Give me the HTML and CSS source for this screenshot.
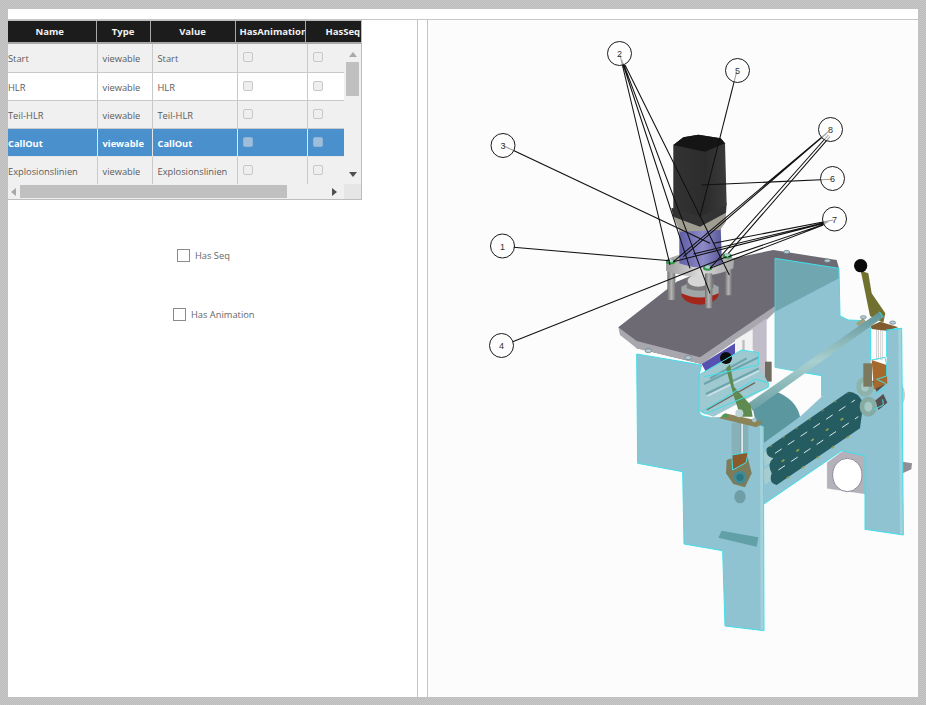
FILE: index.html
```html
<!DOCTYPE html>
<html lang="de">
<head>
<meta charset="utf-8">
<title>Viewables</title>
<link rel="stylesheet" href="styles.css">
</head>
<body>
<div class="page">
  <div class="topstrip"></div>
  <main class="panels">
    <section class="left-panel">
      <div class="grid">
        <div class="grid-body">
          <table class="table head-table">
            <colgroup><col class="h1"><col class="h2"><col class="h3"><col class="h4"><col class="h5"></colgroup>
            <thead>
              <tr><th class="th-name">Name</th><th>Type</th><th>Value</th><th class="th-anim">HasAnimation</th><th class="th-seq">HasSeq</th></tr>
            </thead>
          </table>
          <table class="table">
            <colgroup><col class="c1"><col class="c2"><col class="c3"><col class="c4"><col class="c5"></colgroup>
            <tbody>
              <tr class="alt"><td>Start</td><td>viewable</td><td>Start</td><td><i class="mini"></i></td><td><i class="mini"></i></td></tr>
              <tr><td>HLR</td><td>viewable</td><td>HLR</td><td><i class="mini"></i></td><td><i class="mini"></i></td></tr>
              <tr class="alt"><td>Teil-HLR</td><td>viewable</td><td>Teil-HLR</td><td><i class="mini"></i></td><td><i class="mini"></i></td></tr>
              <tr class="sel"><td>CallOut</td><td>viewable</td><td>CallOut</td><td><i class="mini"></i></td><td><i class="mini"></i></td></tr>
              <tr class="alt"><td>Explosionslinien</td><td>viewable</td><td>Explosionslinien</td><td><i class="mini"></i></td><td><i class="mini"></i></td></tr>
            </tbody>
          </table>
          <div class="vscroll">
            <span class="arrow up"></span>
            <span class="vthumb"></span>
            <span class="arrow down"></span>
          </div>
        </div>
        <div class="hscroll">
          <span class="arrow left"></span>
          <span class="hthumb"></span>
          <span class="arrow right"></span>
          <span class="corner"></span>
        </div>
      </div>
      <label class="check check-seq"><span class="box"></span>Has Seq</label>
      <label class="check check-anim"><span class="box"></span>Has Animation</label>
    </section>
    <section class="right-panel">
      <svg class="model" viewBox="428 20 490 677" width="490" height="677" aria-label="3D model with callouts">
        <defs>
          <linearGradient id="purple" x1="0" x2="1" y1="0" y2="0">
            <stop offset="0" stop-color="#5f5da6"/><stop offset=".55" stop-color="#8c8ac8"/><stop offset="1" stop-color="#5a5898"/>
          </linearGradient>
          <linearGradient id="motor" x1="0" x2="1" y1="0" y2="0">
            <stop offset="0" stop-color="#333"/><stop offset=".6" stop-color="#2c2c2c"/><stop offset="1" stop-color="#3b3b3b"/>
          </linearGradient>
          <linearGradient id="leg" x1="0" x2="1" y1="0" y2="0">
            <stop offset="0" stop-color="#6f6f6f"/><stop offset=".5" stop-color="#b4b4b4"/><stop offset="1" stop-color="#777"/>
          </linearGradient>
          <linearGradient id="ring" x1="0" x2="1" y1="0" y2="0">
            <stop offset="0" stop-color="#9c9c9c"/><stop offset=".5" stop-color="#dadada"/><stop offset="1" stop-color="#a8a8a8"/>
          </linearGradient>
          <linearGradient id="shaft" x1="0" x2="0" y1="0" y2="1">
            <stop offset="0" stop-color="#5e9296"/><stop offset=".5" stop-color="#a9d0d0"/><stop offset="1" stop-color="#6c9fa3"/>
          </linearGradient>
        </defs>
        <g transform="translate(600 240) scale(0.33333)">
          <!-- far bracket and small parts -->
          <path d="M682 668 L730 632 L800 648 L800 762 L682 745 Z" fill="#b5b1bb" stroke="#8f8c98"/>
          <ellipse cx="742" cy="705" rx="44" ry="50" fill="#fff" stroke="#8f8c98" stroke-width="3"/>
          <path d="M908 665 L936 670 L934 688 L908 700 Z" fill="#8f8d96"/>
          <path d="M905 432 Q924 462 908 494 Z" fill="#c9c7cb"/>
          <!-- back wall -->
          <path d="M525 55 L717 85 L720 228 L745 240 L790 242 L812 262 L812 440 L665 470 L665 407 L612 398 L570 390 L525 382 Z" fill="#8fc3d2"/>
          <!-- top plate -->
          <path d="M55 262 L230 125 L400 55 L520 30 L710 60 L717 85 L525 205 L500 228 L305 372 L110 325 Z" fill="#6d6a74"/>
          <path d="M55 262 L60 285 L110 325 L305 372 L500 240 L525 215 L525 198 L300 352 L110 303 Z" fill="#a9a7ae"/>
          <path d="M525 55 L717 85 L717 115 L525 215 Z" fill="#6fa6b0"/>
          <path d="M525 55 L717 85 L720 228 L745 240 L790 242 L812 262 L812 360" fill="none" stroke="#3fdfe9" stroke-width="3"/>
          <path d="M525 55 L525 382 L600 396" fill="none" stroke="#4fd3dc" stroke-width="2.5"/>
          <path d="M612 398 L665 407 L665 470" fill="none" stroke="#3fdfe9" stroke-width="3"/>
          <!-- under-plate parts -->
          <path d="M405 300 L500 235 L500 420 L460 430 L460 330 L405 330 Z" fill="#c0bdc9"/>
          <path d="M405 300 L458 268 L458 330 L405 340 Z" fill="#f2f2f2"/>
          <rect x="427" y="300" width="7" height="40" fill="#bdbdbd"/>
          <path d="M305 372 L405 310 L405 365 L320 400 Z" fill="#5650ae"/>
          <rect x="495" y="365" width="20" height="60" fill="#6f6c5f"/>
          <!-- disc seen behind the plate -->
          <path d="M455 490 L530 455 Q590 480 600 530 L490 625 L470 560 Z" fill="#5a979e"/>
          <!-- front right plate and leg -->
          <path d="M490 610 L600 530 L665 470 L812 425 L860 430 L860 270 L905 265 L910 885 L795 868 L795 648 L725 632 L492 792 Z" fill="#8fc3d2"/>
          <path d="M905 265 L910 885 L900 884 L895 266 Z" fill="#a3d2db"/>
          <path d="M858 270 L905 265 L910 885 L795 868 L795 648 L725 632 L492 792" fill="none" stroke="#3fdfe9" stroke-width="3"/>
          <path d="M860 270 L860 350" fill="none" stroke="#3fdfe9" stroke-width="3"/>
          <!-- rollers -->
          <path d="M490 640 L530 612 L545 640 L495 680 Z" fill="#a5cdd0"/>
          <path d="M490 690 L530 662 L545 695 L495 735 Z" fill="#a5cdd0"/>
          <path d="M500 625 L745 455 Q775 455 790 490 L780 565 L530 735 Q505 730 515 700 Q500 670 520 655 Q495 650 500 625 Z" fill="#255c62"/>
          <path d="M525 640 L765 480 M535 690 L775 530" stroke="#d7e8e8" stroke-width="3" stroke-dasharray="24 22" fill="none"/>
          <path d="M545 665 L765 510 M560 715 L775 570" stroke="#90a24f" stroke-width="5" stroke-dasharray="10 44" fill="none"/>
          <path d="M510 620 L745 458" stroke="#7b8a4a" stroke-width="4" stroke-dasharray="7 40" fill="none"/>
          <!-- shafts and collars -->
          <path d="M815 425 L840 405 L860 430 L830 455 Z" fill="#55504d"/>
          <path d="M825 482 L850 462 L862 488 L835 510 Z" fill="#55504d"/>
          <ellipse cx="795" cy="440" rx="26" ry="30" fill="#8db3ab"/>
          <ellipse cx="805" cy="500" rx="26" ry="30" fill="#86aba3"/>
          <ellipse cx="795" cy="440" rx="12" ry="15" fill="#a6c9c5"/>
          <ellipse cx="805" cy="500" rx="12" ry="15" fill="#a6c9c5"/>
          <!-- right lever -->
          <rect x="790" y="370" width="26" height="70" fill="#7c7a5e"/>
          <path d="M815 360 L860 375 L862 430 L822 448 Z" fill="#a5692e"/>
          <rect x="830" y="268" width="6" height="90" fill="#f5f5f5" stroke="#888"/>
          <rect x="842" y="272" width="5" height="86" fill="#f5f5f5" stroke="#999"/>
          <path d="M768 250 L790 235 L812 262 L785 268 Z" fill="#9da180"/>
          <path d="M812 258 L840 245 L895 262 L860 272 L815 267 Z" fill="#805c30"/>
          <path d="M782 92 L805 100 L815 160 L856 220 L850 248 L810 228 L786 110 Z" fill="#70702f"/>
          <circle cx="782" cy="77" r="20" fill="#0a0a0a"/>
          <path d="M858 270 L905 265" fill="none" stroke="#3fdfe9" stroke-width="3"/>
          <path d="M815 360 L855 352 L860 375 L860 408 L830 418 L856 430 L856 445 L825 462 M848 478 L850 495 L822 508" fill="none" stroke="#3fdfe9" stroke-width="3"/>
          <!-- long shaft -->
          <path d="M445 490 L838 215 L850 232 L458 512 Z" fill="url(#shaft)"/>
          <path d="M838 215 L850 232" stroke="#3fdfe9" stroke-width="3"/>
          <!-- front left side wall with flange -->
          <path d="M110 342 L305 375 L297 405 L297 515 Q300 530 330 532 L385 530 L490 560 L492 1172 L375 1158 L368 932 L252 912 L248 695 L113 670 Z" fill="#8fc3d2"/>
          <path d="M480 556 L490 560 L492 1172 L482 1170 Z" fill="#a3d2db"/>
          <path d="M297 405 L425 330 L475 338 L475 375 L505 428 L505 442 L340 530 L297 515 Z" fill="#9fc9d0"/>
          <path d="M312 432 L475 352 M318 462 L476 385 M330 415 L440 355" stroke="#6da4ac" stroke-width="6" fill="none"/>
          <path d="M322 468 L478 392" stroke="#c9e1e5" stroke-width="5" fill="none"/>
          <path d="M320 510 L465 428" stroke="#6f675f" stroke-width="4" fill="none"/>
          <rect x="395" y="548" width="50" height="95" fill="#86b1b9"/>
          <rect x="423" y="548" width="7" height="95" fill="#dfe9ea" stroke="#6a787c"/>
          <path d="M380 660 L440 640 L455 700 L435 742 L400 732 L378 700 Z" fill="#7d7c5a"/>
          <path d="M397 645 L443 637 L438 668 L398 688 Z" fill="#8b5a2b"/>
          <circle cx="420" cy="712" r="19" fill="#3f8c99"/>
          <circle cx="420" cy="712" r="11" fill="#2f7682"/>
          <ellipse cx="420" cy="770" rx="17" ry="20" fill="#6f9ea6"/>
          <path d="M355 893 L365 872 L475 892 L470 920 Z" fill="#62a0a8"/>
          <path d="M358 535 L375 520 L488 545 L470 562 Z" fill="#8a8458"/>
          <!-- left lever -->
          <path d="M378 385 L390 372 L402 440 L452 495 L458 530 L422 530 L402 470 Z" fill="#5f8a50"/>
          <circle cx="378" cy="354" r="18" fill="#0c0c0c"/>
          <circle cx="418" cy="520" r="12" fill="#bcd3d6"/>
          <circle cx="463" cy="540" r="7" fill="#a9c3d0"/>
          <ellipse cx="376" cy="527" rx="9" ry="5" fill="#3fa05a"/>
          <!-- cyan outlines -->
          <path d="M110 342 L305 375 L297 405 L425 330 L475 338 L475 375 L312 410 M297 405 L297 515 Q300 530 330 532 M305 515 L465 418 L505 428 L505 442 L315 522 Z M490 560 L492 1172 L375 1158 L368 932 L252 912 L248 695 L113 670 L110 342" fill="none" stroke="#3fdfe9" stroke-width="3"/>
          <path d="M395 645 L445 637 L438 668 L398 690 Z" fill="none" stroke="#3fdfe9" stroke-width="3"/>
          <!-- bolts -->
          <path d="M145 332 m-10 0 a10 6 0 1 0 20 0 a10 6 0 1 0 -20 0 M265 353 m-10 0 a10 6 0 1 0 20 0 a10 6 0 1 0 -20 0 M560 36 m-9 0 a9 5 0 1 0 18 0 a9 5 0 1 0 -18 0 M682 62 m-9 0 a9 5 0 1 0 18 0 a9 5 0 1 0 -18 0 M790 232 m-9 0 a9 5 0 1 0 18 0 a9 5 0 1 0 -18 0 M878 248 m-9 0 a9 5 0 1 0 18 0 a9 5 0 1 0 -18 0" fill="#b7c9d3" stroke="#5e7d84" stroke-width="2"/>
        </g>
        <g transform="translate(480 30) scale(0.33333)">
          <!-- motor assembly -->
          <ellipse cx="660" cy="790" rx="56" ry="34" fill="#a4251a"/>
          <path d="M604 770 Q660 740 716 770 L716 790 Q660 815 604 790 Z" fill="#a0a6a6"/>
          <path d="M620 745 L700 745 L700 775 Q660 790 620 775 Z" fill="#7c7c7c"/>
          <ellipse cx="655" cy="752" rx="32" ry="18" fill="#d6d6d6"/>
          <rect x="562" y="718" width="24" height="92" rx="4" fill="url(#leg)"/>
          <rect x="735" y="712" width="20" height="84" rx="4" fill="url(#leg)"/>
          <path d="M558 690 Q660 640 762 685 L760 715 Q660 760 558 722 Z" fill="url(#ring)"/>
          <path d="M598 600 L722 590 L726 700 Q665 725 598 700 Z" fill="url(#purple)"/>
          <rect x="675" y="730" width="22" height="105" rx="4" fill="url(#leg)"/>
          <path d="M580 560 L738 545 L738 575 L720 600 L600 605 Z" fill="#a09e92"/>
          <path d="M574 535 L740 520 L738 548 L660 590 L580 560 Z" fill="#333"/>
          <path d="M580 345 L610 322 L655 314 L722 325 L735 340 L740 525 L660 560 L580 535 Z" fill="url(#motor)"/>
          <path d="M580 345 L610 322 L655 314 L722 325 L735 340 L675 365 Z" fill="#151515"/>
          <ellipse cx="572" cy="695" rx="14" ry="8" fill="#2f9a4d"/><ellipse cx="683" cy="714" rx="14" ry="8" fill="#2f9a4d"/><ellipse cx="742" cy="678" rx="14" ry="8" fill="#2f9a4d"/>
          <ellipse cx="572" cy="692" rx="8" ry="5" fill="#b8ccd6"/><ellipse cx="683" cy="711" rx="8" ry="5" fill="#b8ccd6"/><ellipse cx="742" cy="675" rx="8" ry="5" fill="#b8ccd6"/>
          <!-- leader lines -->
          <g class="leaders">
            <path d="M100 652 L570 692"/>
            <path d="M68 346 L690 640"/>
            <path d="M98 935 L740 680"/>
            <path d="M770 125 L660 560"/>
            <path d="M1057 448 L665 465"/>
            <path d="M420 75 L570 705 M425 90 L630 715 M430 100 L690 790 M435 105 L748 735"/>
            <path d="M1045 305 L580 695 M1040 310 L610 680 M1045 315 L690 715 M1050 320 L745 670"/>
            <path d="M1060 570 L700 640 M1045 575 L640 672 M1040 578 L580 695 M1035 582 L745 680 M1030 585 L690 715"/>
          </g>
        </g>
        <g class="callouts">
          <g><circle cx="619.5" cy="53.5" r="12"/><text x="619.5" y="57">2</text></g>
          <g><circle cx="737.5" cy="70.5" r="12"/><text x="737.5" y="74">5</text></g>
          <g><circle cx="830.5" cy="129.5" r="12"/><text x="830.5" y="133">8</text></g>
          <g><circle cx="832.5" cy="178.5" r="12"/><text x="832.5" y="182">6</text></g>
          <g><circle cx="834.5" cy="219" r="12"/><text x="834.5" y="222.5">7</text></g>
          <g><circle cx="503" cy="145.5" r="12"/><text x="503" y="149">3</text></g>
          <g><circle cx="502.5" cy="246" r="12"/><text x="502.5" y="249.5">1</text></g>
          <g><circle cx="501.5" cy="345.5" r="12"/><text x="501.5" y="349">4</text></g>
        </g>
      </svg>
    </section>
  </main>
</div>
</body>
</html>
```
FILE: styles.css
```css
* { box-sizing: border-box; }
html, body { margin: 0; height: 100%; }
body {
  width: 926px;
  height: 705px;
  overflow: hidden;
  padding: 9px 8px 8px;
  background: repeating-conic-gradient(#bcbcbc 0 25%, #c8c8c8 0 50%) 0 0 / 2px 2px;
  font-family: "Open Sans", "Liberation Sans", sans-serif;
  color: #555;
}
.page {
  height: 688px;
  width: 910px;
  background: #fff;
  display: flex;
  flex-direction: column;
}
.topstrip { height: 10px; flex: none; }
.panels {
  flex: 1;
  display: flex;
  gap: 9px;
  border-top: 1px solid #c8c8c8;
}
.left-panel {
  position: relative;
  width: 410px;
  border-right: 1px solid #c4c4c4;
}
.right-panel {
  flex: 1;
  border-left: 1px solid #c4c4c4;
  background: #fcfcfc;
  overflow: hidden;
}
.model { display: block; }
.leaders path { fill: none; stroke: #111; stroke-width: 3.2; }
.callouts circle { fill: #fff; fill-opacity: .6; stroke: #1a1a1a; stroke-width: 1; }
.callouts text {
  font-family: "Liberation Sans", sans-serif;
  font-size: 9px;
  text-anchor: middle;
  fill: #333;
}

/* grid */
.grid {
  width: 354px;
  height: 180px;
  border-top: 1px solid #bdbdbd;
  border-right: 1px solid #bdbdbd;
  border-bottom: 1px solid #bdbdbd;
  display: flex;
  flex-direction: column;
  background: #f0f0f0;
}
.grid-body { height: 163px; flex: none; overflow: hidden; position: relative; }
.table {
  border-collapse: collapse;
  table-layout: fixed;
  width: 353px;
  font-size: 9.3px;
}
.h1 { width: 88px; } .h2 { width: 54px; } .h3 { width: 85px; } .h4 { width: 70px; } .h5 { width: 56px; }
.c1 { width: 89px; } .c2 { width: 55px; } .c3 { width: 85px; } .c4 { width: 70px; } .c5 { width: 54px; }
th {
  height: 22px;
  padding: 0;
  background: #1c1c1c;
  color: #f2f2f2;
  font-size: 9.5px;
  font-weight: 700;
  text-align: center;
  white-space: nowrap;
  overflow: hidden;
  border-left: 1px solid #a8a8a8;
  border-bottom: 2px solid #a8a8a8;
}
th:first-child { border-left: 0; }
th.th-name { padding-right: 4px; }
th.th-anim { text-align: left; padding-left: 4px; }
th.th-seq { text-align: left; padding-left: 20px; }
td {
  height: 28px;
  padding: 2px 0 0 5px;
  border-left: 1px solid #c9c9c9;
  border-bottom: 1px solid #c9c9c9;
  background: #fff;
  white-space: nowrap;
  overflow: hidden;
  color: #5b5b5b;
}
td:first-child { border-left: 0; padding-left: 0; }
tr.alt td { background: #f0f0f0; }
tr.sel td {
  background: #4a90cd;
  color: #fff;
  font-weight: 700;
  border-bottom-color: #e6e6e6;
  border-left-color: #e6e6e6;
}
.mini {
  display: block;
  width: 10px;
  height: 10px;
  margin: -3px 0 0 0;
  border: 1px solid #c8c8c8;
  border-radius: 2px;
  background: #eeeeee;
}
tr.sel .mini { background: #9dbfdc; border-color: #8fb4d6; }

.vscroll {
  position: absolute;
  top: 24px;
  right: 0;
  bottom: 0;
  width: 17px;
  background: #f0f0f0;
  display: flex;
  flex-direction: column;
  align-items: center;
  padding-top: 7px;
}
.vthumb { display: block; width: 13px; height: 34px; margin-top: 5px; background: #c0c0c0; }
.arrow { display: block; width: 0; height: 0; border: 4px solid transparent; }
.arrow.up { border-top: 0; border-bottom: 5px solid #a8a8a8; }
.arrow.down { border-bottom: 0; border-top: 5px solid #505050; margin-top: auto; margin-bottom: 7px; }
.hscroll {
  flex: 1;
  display: flex;
  align-items: center;
  padding-left: 3px;
  background: #f0f0f0;
}
.arrow.left { border-left: 0; border-right: 5px solid #a8a8a8; }
.hthumb { display: block; width: 267px; height: 13px; margin-left: 4px; background: #c0c0c0; }
.arrow.right { border-right: 0; border-left: 5px solid #505050; margin-left: auto; margin-right: 7px; }
.corner { display: block; width: 17px; height: 15px; background: #e6e6e6; }

/* checkboxes */
.check {
  position: absolute;
  display: flex;
  align-items: center;
  gap: 5px;
  font-size: 9.3px;
  color: #666;
  white-space: nowrap;
}
.check-seq { left: 169px; top: 229px; }
.check-anim { left: 165px; top: 288px; }
.box {
  display: block;
  width: 13px;
  height: 13px;
  border: 1px solid #8a8a8a;
  background: #fff;
}
```
